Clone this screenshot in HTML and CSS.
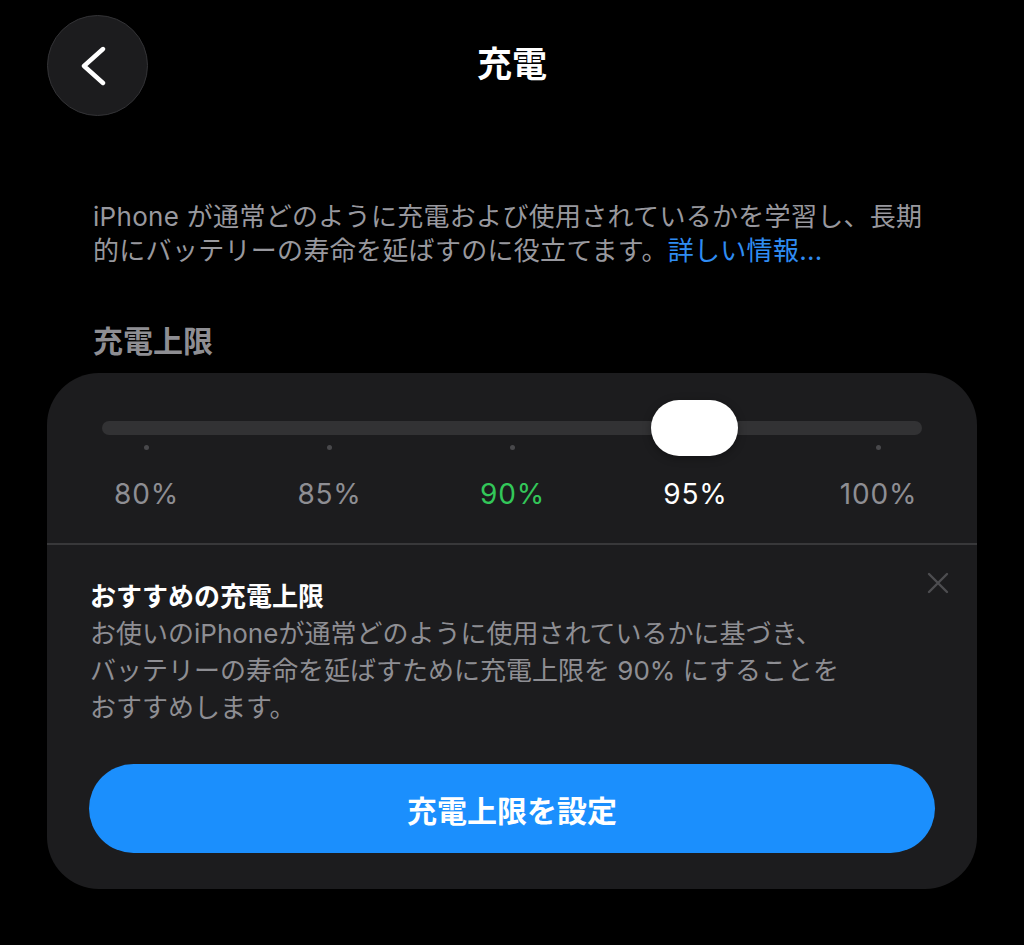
FILE: index.html
```html
<!DOCTYPE html>
<html lang="ja">
<head>
  <meta charset="UTF-8" />
  <meta name="viewport" content="width=device-width, initial-scale=1" />
  <title>充電</title>
  <link rel="stylesheet" href="styles.css">
</head>
<body>

  <!-- Barra superior -->
  <header class="barra">
    <button class="volver" aria-label="戻る">
      <svg width="40" height="40" viewBox="0 0 40 40" aria-hidden="true">
        <path d="M28 3 L9 20 L28 37" fill="none" stroke="#fff" stroke-width="4.4" stroke-linecap="round" stroke-linejoin="round" />
      </svg>
    </button>
    <h1 class="titulo">充電</h1>
    <span></span>
  </header>

  <p class="descripcion">
    iPhone が通常どのように充電および使用されているかを学習し、長期<br>
    的にバッテリーの寿命を延ばすのに役立てます。<a href="#" class="enlace">詳しい情報...</a>
  </p>

  <h2 class="seccion">充電上限</h2>

  <!-- Tarjeta con el control deslizante -->
  <section class="tarjeta">
    <div class="deslizador">
      <div class="pista">
        <div class="perilla"></div>
      </div>
      <div class="paradas">
        <div class="parada"><span class="punto"></span><span class="valor">80%</span></div>
        <div class="parada"><span class="punto"></span><span class="valor">85%</span></div>
        <div class="parada"><span class="punto"></span><span class="valor verde">90%</span></div>
        <div class="parada"><span class="punto"></span><span class="valor activo">95%</span></div>
        <div class="parada"><span class="punto"></span><span class="valor">100%</span></div>
      </div>
    </div>

    <div class="sugerencia">
      <button class="cerrar" aria-label="閉じる">
        <svg width="22" height="22" viewBox="0 0 22 22" aria-hidden="true">
          <path d="M2 2 L20 20 M20 2 L2 20" stroke="#4d4d50" stroke-width="2.4" stroke-linecap="round" />
        </svg>
      </button>
      <h3 class="sugerencia-titulo">おすすめの充電上限</h3>
      <p class="sugerencia-texto">
        お使いのiPhoneが通常どのように使用されているかに基づき、<br>
        バッテリーの寿命を延ばすために充電上限を 90% にすることを<br>
        おすすめします。
      </p>
      <button class="boton">充電上限を設定</button>
    </div>
  </section>

</body>
</html>
```

FILE: styles.css
```css
/* ----------------- Base ----------------- */
body {
  background-color: #000;
  margin: 0;
  height: 100vh;
  overflow: hidden;
  font-family: Inter, 'Noto Sans CJK JP', sans-serif;
  color: white;
}

button {
  font-family: inherit;
  border: none;
  cursor: pointer;
}

/* ----------------- Barra superior ----------------- */
.barra {
  display: grid;
  grid-template-columns: 101px 1fr 101px;
  align-items: center;
  padding: 15px 47px 0;
}

.volver {
  width: 101px;
  height: 101px;
  border-radius: 50%;
  background: #1c1c1e;
  border: 1.5px solid #333336;
  display: flex;
  align-items: center;
  justify-content: center;
  padding: 0 6px 0 0;
}

.titulo {
  margin: 0;
  text-align: center;
  font-size: 35px;
  font-weight: 700;
  line-height: 40px;
  margin-top: -3px;
}

/* ----------------- Texto ----------------- */
.descripcion {
  margin: 84px 0 0;
  padding-left: 93px;
  font-size: 26px;
  line-height: 34px;
  letter-spacing: 0.3px;
  color: #98989e;
  white-space: nowrap;
}

.enlace {
  color: #2f8cf2;
  text-decoration: none;
}

.seccion {
  margin: 53px 0 0;
  padding-left: 93px;
  font-size: 30px;
  line-height: 40px;
  font-weight: 700;
  color: #8e8e93;
}

/* ----------------- Tarjeta ----------------- */
.tarjeta {
  margin: 12px 47px 0;
  background: #1c1c1e;
  border-radius: 52px;
  overflow: hidden;
}

.deslizador {
  padding: 48px 0 32px;
  border-bottom: 2px solid #38383a;
}

.pista {
  position: relative;
  height: 14px;
  margin: 0 55px;
  background: #323234;
  border-radius: 7px;
}

.perilla {
  position: absolute;
  top: -21px;
  left: 549px; /* centro en la parada 95% */
  width: 87px;
  height: 56px;
  background: #fff;
  border-radius: 28px;
  box-shadow: 0 2px 8px rgba(0,0,0,0.35);
}

.paradas {
  display: grid;
  grid-template-columns: repeat(5, 1fr);
  padding: 0 7px 0 8px;
}

.parada {
  display: flex;
  flex-direction: column;
  align-items: center;
}

.punto {
  width: 5px;
  height: 5px;
  margin-top: 10px;
  border-radius: 50%;
  background: #48484b;
}

.valor {
  margin-top: 27px;
  font-size: 28px;
  line-height: 34px;
  letter-spacing: 0.8px;
  color: #8e8e93;
}

.valor.verde {
  color: #33c759;
}

.valor.activo {
  color: #fff;
}

/* ----------------- Sugerencia ----------------- */
.sugerencia {
  position: relative;
  padding: 34px 42px 36px;
}

.cerrar {
  position: absolute;
  top: 27px;
  right: 28px;
  width: 22px;
  height: 22px;
  padding: 0;
  background: transparent;
}

.sugerencia-titulo {
  margin: 0 0 0 1px;
  font-size: 26px;
  line-height: 36px;
  font-weight: 700;
}

.sugerencia-texto {
  margin: 0 0 0 1px;
  font-size: 26px;
  line-height: 37px;
  color: #8e8e93;
  white-space: nowrap;
}

.boton {
  display: block;
  width: 100%;
  height: 89px;
  margin-top: 38px;
  border-radius: 45px;
  background: #1b8ffd;
  color: #fff;
  font-size: 30px;
  font-weight: 700;
}
```
